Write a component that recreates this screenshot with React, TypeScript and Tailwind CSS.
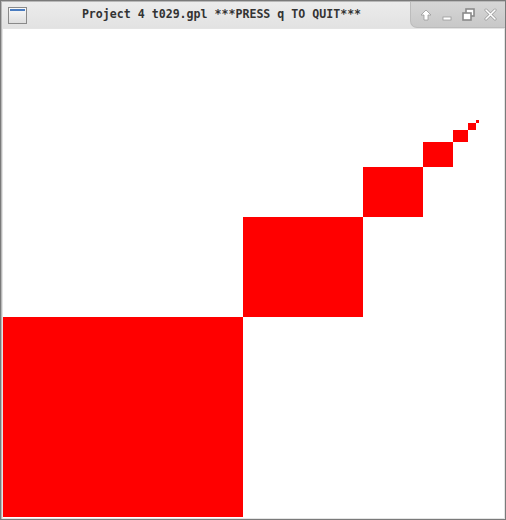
import React from "react";

export default function App() {
  const rects = [
    { x: 0, y: 288, w: 240, h: 200 },
    { x: 240, y: 188, w: 120, h: 100 },
    { x: 360, y: 138, w: 60, h: 50 },
    { x: 420, y: 113, w: 30, h: 25 },
    { x: 450, y: 100.5, w: 15, h: 12.5 },
    { x: 465, y: 94.25, w: 7.5, h: 6.25 },
    { x: 472.5, y: 91.125, w: 3.75, h: 3.125 },
  ];
  return (
    <div className="w-[506px] h-[520px] bg-[#7a7a7a] p-px">
      <div className="w-full h-full flex flex-col bg-[#e4e4e4] border-l border-t border-[#b8b8b8]">
        <div className="h-[27px] flex items-stretch bg-gradient-to-b from-[#ececec] to-[#e2e2e2] relative">
          <div className="w-[30px] flex items-center justify-center">
            <div className="w-[19px] h-[17px] border border-[#8a8a8a] bg-gradient-to-b from-[#fafafa] to-[#dedede] flex flex-col">
              <div className="h-[2px] bg-[#4a7cc0] mt-px mx-px" />
            </div>
          </div>
          <div className="flex-1 flex items-center justify-center pr-[94px]">
            <span className="font-['DejaVu_Sans_Mono',monospace] font-bold text-[11.6px] text-[#333333] whitespace-pre">
              Project 4 t029.gpl ***PRESS q TO QUIT***
            </span>
          </div>
          <div className="absolute right-0 top-0 w-[95px] h-[26px] bg-gradient-to-b from-[#d6d6d6] to-[#c8c8c8] rounded-bl-[7px] border-l border-b border-[#bcbcbc] flex items-center justify-around px-[4px]">
            <svg width="12" height="12" viewBox="0 0 12 12">
              <path d="M6 1 L11 6 L8 6 L8 11 L4 11 L4 6 L1 6 Z" fill="#ffffff" stroke="#9a9a9a" strokeWidth="0.8" />
            </svg>
            <svg width="12" height="12" viewBox="0 0 12 12">
              <rect x="2" y="8" width="8" height="3" fill="#ffffff" stroke="#9a9a9a" strokeWidth="0.8" />
            </svg>
            <svg width="13" height="13" viewBox="0 0 13 13">
              <rect x="4" y="1" width="8" height="7" fill="#ffffff" stroke="#8a8a8a" strokeWidth="1.6" />
              <rect x="1" y="5" width="8" height="7" fill="#ffffff" stroke="#8a8a8a" strokeWidth="1.6" />
            </svg>
            <svg width="13" height="13" viewBox="0 0 13 13">
              <path d="M2 2 L11 11 M11 2 L2 11" stroke="#9a9a9a" strokeWidth="3" strokeLinecap="round" />
              <path d="M2 2 L11 11 M11 2 L2 11" stroke="#ffffff" strokeWidth="1.6" strokeLinecap="round" />
            </svg>
          </div>
        </div>
        <div className="flex-1 p-px flex">
          <div className="flex-1 bg-white">
            <svg width="500" height="489" viewBox="0 0 500 489" shapeRendering="crispEdges">
              {rects.map((r, i) => (
                <rect key={i} x={r.x} y={r.y} width={r.w} height={r.h} fill="#ff0000" />
              ))}
            </svg>
          </div>
        </div>
      </div>
    </div>
  );
}
